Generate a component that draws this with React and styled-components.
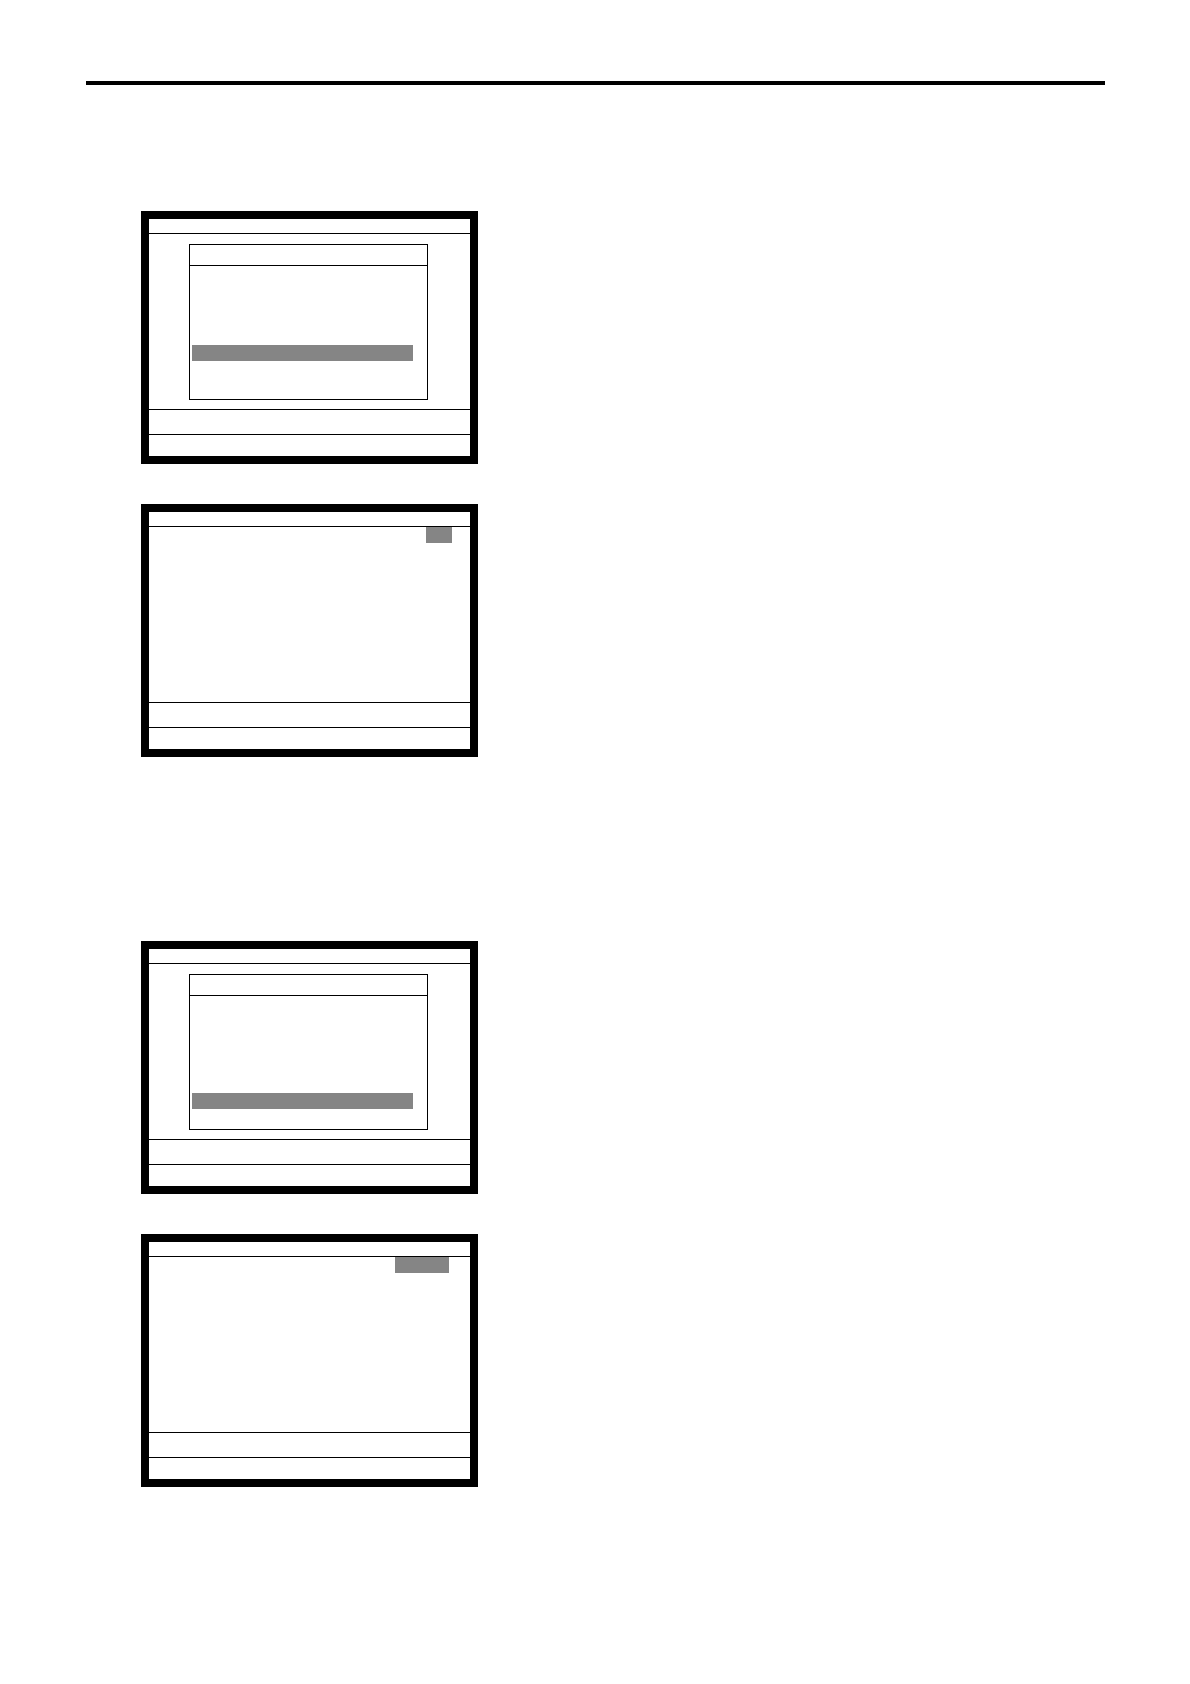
import styled, { createGlobalStyle } from "styled-components"

const Global = createGlobalStyle`
    * { box-sizing: border-box; }
    body {
        margin: 0;
        background: #fff;
        font-family: "Liberation Sans", Arial, sans-serif;
    }
`

const Page = styled.div`
    width: 1190px;
    min-height: 1684px;
    padding-top: 81px;
`

const Rule = styled.div`
    margin-left: 86px;
    width: 1019px;
    height: 4px;
    background: #000;
`

const Group = styled.div`
    display: flex;
    flex-direction: column;
    gap: 40px;
    margin-left: 141px;
    margin-top: ${(p) => p.$top}px;
`

const Screen = styled.div`
    width: 337px;
    height: 253px;
    border: 8px solid #000;
    display: flex;
    flex-direction: column;
    background: #fff;
`

const TitleBar = styled.div`
    height: 15px;
    border-bottom: 1px solid #000;
`

const Main = styled.div`
    height: 175px;
    display: flex;
    flex-direction: column;
`

const StatusBar = styled.div`
    height: ${(p) => p.$h}px;
    border-top: 1px solid #000;
`

const Dialog = styled.div`
    margin: 10px 0 0 40px;
    width: 239px;
    height: 156px;
    border: 1px solid #000;
    display: flex;
    flex-direction: column;
`

const DialogHead = styled.div`
    height: 21px;
    border-bottom: 1px solid #000;
`

const MenuList = styled.div`
    display: flex;
    flex-direction: column;
    gap: 2px;
    padding: 7px 0 0 2px;
`

const MenuRow = styled.div`
    height: 16px;
    width: 221px;
    background: ${(p) => (p.$selected ? "#858585" : "transparent")};
`

const CursorRow = styled.div`
    display: flex;
    justify-content: flex-end;
    padding-right: ${(p) => p.$right}px;
`

const Cursor = styled.div`
    width: ${(p) => p.$w}px;
    height: 16px;
    background: #858585;
`

function MenuScreen({ selected }) {
    return (
        <Screen>
            <TitleBar />
            <Main>
                <Dialog>
                    <DialogHead />
                    <MenuList>
                        {[0, 1, 2, 3, 4, 5].map((i) => (
                            <MenuRow key={i} $selected={i === selected} />
                        ))}
                    </MenuList>
                </Dialog>
            </Main>
            <StatusBar $h={25} />
            <StatusBar $h={22} />
        </Screen>
    )
}

function EntryScreen({ cursorWidth, right }) {
    return (
        <Screen>
            <TitleBar />
            <Main>
                <CursorRow $right={right}>
                    <Cursor $w={cursorWidth} />
                </CursorRow>
            </Main>
            <StatusBar $h={25} />
            <StatusBar $h={22} />
        </Screen>
    )
}

export default function App() {
    return (
        <>
            <Global />
            <Page>
                <Rule />
                <Group $top={126}>
                    <MenuScreen selected={4} />
                    <EntryScreen cursorWidth={26} right={18} />
                </Group>
                <Group $top={184}>
                    <MenuScreen selected={5} />
                    <EntryScreen cursorWidth={54} right={21} />
                </Group>
            </Page>
        </>
    )
}
